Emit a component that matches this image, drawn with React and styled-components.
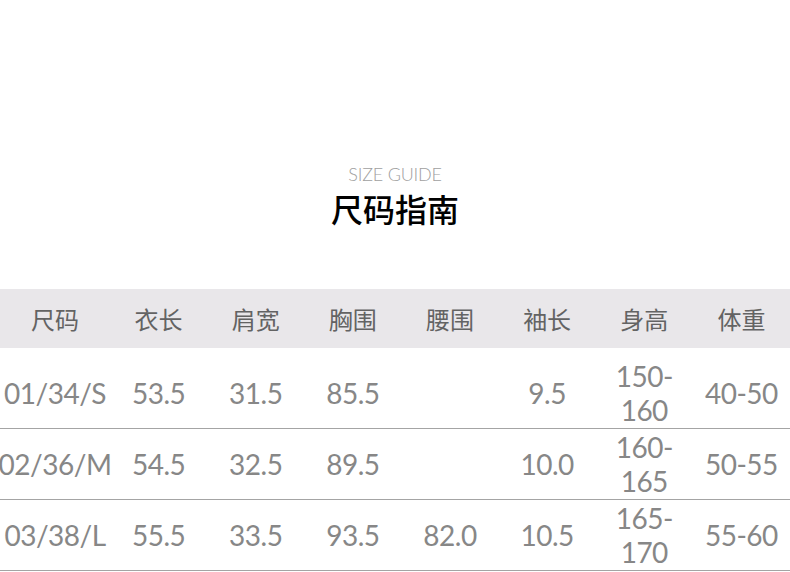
import React from "react";
import styled, { createGlobalStyle } from "styled-components";

const GlobalStyle = createGlobalStyle`
  html, body {
    margin: 0;
    padding: 0;
    background: #ffffff;
  }
  body {
    font-family: "Lato", "Noto Sans CJK SC", sans-serif;
  }
`;

const Page = styled.div({
  width: "790px",
  display: "flex",
  flexDirection: "column",
  paddingTop: "164px",
});

const TitleBlock = styled.div({
  display: "flex",
  flexDirection: "column",
  alignItems: "center",
  marginBottom: "63px",
});

const SubTitle = styled.div({
  fontFamily: '"Lato", sans-serif',
  fontWeight: 300,
  fontSize: "18px",
  lineHeight: "20px",
  color: "#a0a0a0",
  letterSpacing: "-0.2px",
});

const Title = styled.h1({
  margin: "6px 0 0",
  fontFamily: '"Noto Sans CJK SC", sans-serif',
  fontWeight: 500,
  fontSize: "32px",
  lineHeight: "36px",
  color: "#000000",
});

const Table = styled.div({
  display: "flex",
  flexDirection: "column",
  width: "100%",
});

const HeaderRow = styled.div({
  display: "grid",
  gridTemplateColumns: "110px repeat(7, 1fr)",
  alignItems: "center",
  height: "59px",
  backgroundColor: "#e9e7ea",
});

const HeaderCell = styled.div({
  textAlign: "center",
  fontFamily: '"Noto Sans CJK SC", sans-serif',
  fontSize: "24px",
  color: "#636363",
  lineHeight: "30px",
});

const Body = styled.div({
  display: "flex",
  flexDirection: "column",
  paddingTop: "10px",
});

const Row = styled.div({
  display: "grid",
  gridTemplateColumns: "110px repeat(7, 1fr)",
  alignItems: "center",
  height: "70px",
  borderBottom: "1px solid #a4a4a4",
});

const Cell = styled.div`
  justify-self: center;
  text-align: center;
  font-family: "Lato", sans-serif;
  font-size: 28px;
  line-height: 34px;
  letter-spacing: -0.5px;
  color: #878787;
  white-space: ${(p) => (p.$wrap ? "normal" : "nowrap")};
  max-width: ${(p) => (p.$wrap ? "66px" : "none")};
`;

const headers = ["尺码", "衣长", "肩宽", "胸围", "腰围", "袖长", "身高", "体重"];

const rows = [
  ["01/34/S", "53.5", "31.5", "85.5", "", "9.5", "150-160", "40-50"],
  ["02/36/M", "54.5", "32.5", "89.5", "", "10.0", "160-165", "50-55"],
  ["03/38/L", "55.5", "33.5", "93.5", "82.0", "10.5", "165-170", "55-60"],
];

const App = () => {
  return (
    <Page>
      <GlobalStyle />
      <TitleBlock>
        <SubTitle>SIZE GUIDE</SubTitle>
        <Title>尺码指南</Title>
      </TitleBlock>
      <Table>
        <HeaderRow>
          {headers.map((h) => (
            <HeaderCell key={h}>{h}</HeaderCell>
          ))}
        </HeaderRow>
        <Body>
          {rows.map((row) => (
            <Row key={row[0]}>
              {row.map((value, i) => (
                <Cell key={i} $wrap={i === 6}>
                  {value}
                </Cell>
              ))}
            </Row>
          ))}
        </Body>
      </Table>
    </Page>
  );
};

export default App;
